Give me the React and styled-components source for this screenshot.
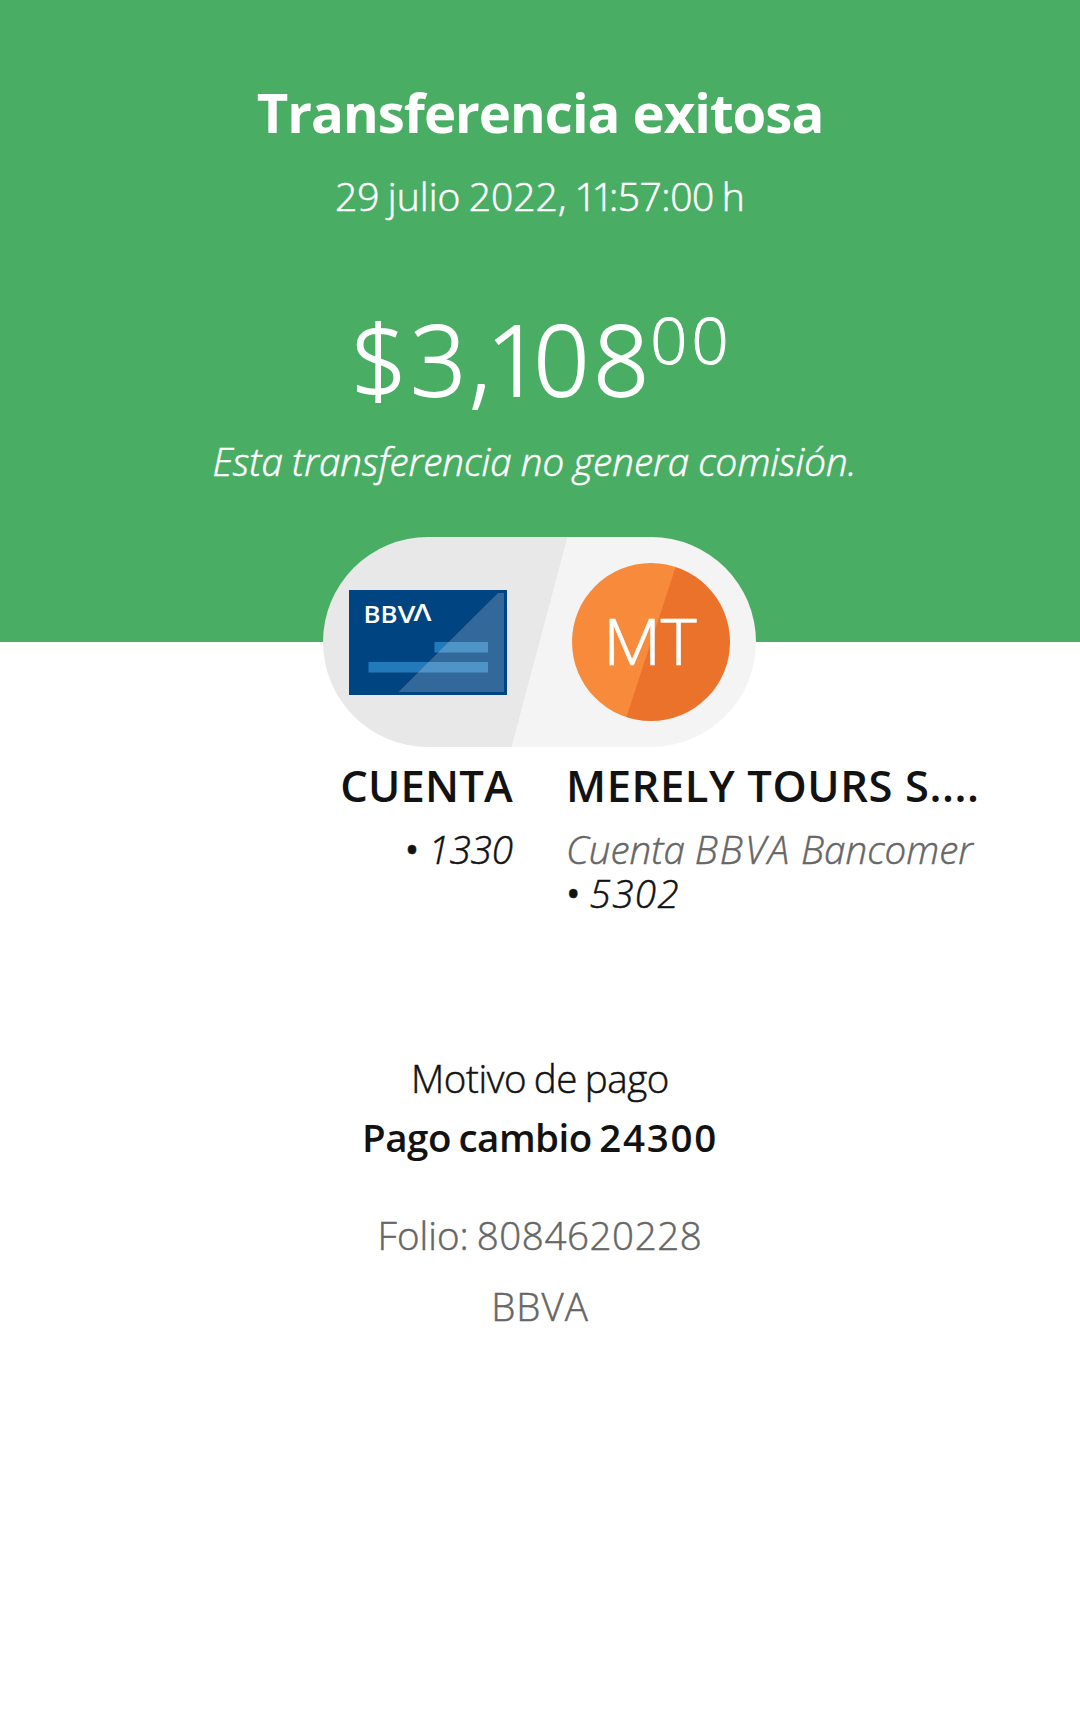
import React from "react";
import styled, { createGlobalStyle } from "styled-components";

const GlobalStyle = createGlobalStyle`
  * {
    box-sizing: border-box;
  }

  body {
    margin: 0;
    background: #ffffff;
    color: #121212;
    font-family: "Open Sans", "Noto Sans", sans-serif;
  }
`;

function App() {
  return (
    <>
      <GlobalStyle />
      <Receipt>
        <Header>
          <Title>Transferencia exitosa</Title>
          <DateText>
            29 julio 2022, <Spaced $gap={-5}>11</Spaced>
            <Spaced $gap={-0.5}>:57:00</Spaced> h
          </DateText>
          <Amount>
            <Spaced $gap={3}>$3</Spaced>
            <Spaced $gap={-4}>,</Spaced>
            <Spaced $gap={-9}>1</Spaced>
            <Spaced $gap={4}>0</Spaced>8<Cents>00</Cents>
          </Amount>
          <Commission>Esta transferencia no genera comisión.</Commission>
        </Header>

        {/* Origin card and destination avatar */}
        <Pill>
          <CardIcon />
          <Avatar>MT</Avatar>
        </Pill>

        <Accounts>
          <Account $align="right">
            <AccountName $gap={0.2}>CUENTA</AccountName>
            <AccountLine>
              <Bullet>•</Bullet> 1330
            </AccountLine>
          </Account>
          <Account $align="left">
            <AccountName $gap={0.6}>MERELY TOURS S....</AccountName>
            <AccountLine $muted>
              Cuenta <Spaced $gap={2}>BBVA</Spaced> Bancomer
            </AccountLine>
            <AccountLine>
              <Bullet>•</Bullet> <Spaced $gap={1.5}>5302</Spaced>
            </AccountLine>
          </Account>
        </Accounts>

        <Details>
          <Label>Motivo de pago</Label>
          <Reason>
            Pago cambio <Spaced $gap={1.7}>24300</Spaced>
          </Reason>
          <Folio>
            Folio: <Spaced $gap={0.6}>8084620228</Spaced>
          </Folio>
          <Bank>BBVA</Bank>
        </Details>
      </Receipt>
    </>
  );
}

function CardIcon() {
  return (
    <CardSvg viewBox="0 0 158 105">
      <rect width="158" height="105" fill="#004481" />
      <rect x="85.5" y="52" width="53.5" height="10.5" fill="#237aba" />
      <rect x="19.5" y="72" width="119.5" height="10.5" fill="#237aba" />
      <path d="M149 3h6v99H49.5z" fill="#ffffff" fillOpacity="0.2" />
      <CardText
        x="14.5"
        y="32.7"
        textLength="34"
        lengthAdjust="spacingAndGlyphs"
      >
        BB
      </CardText>
      <CardText
        x="48.5"
        y="32.7"
        textLength="18"
        lengthAdjust="spacingAndGlyphs"
      >
        V
      </CardText>
      <CardText
        x="64.5"
        y="31.2"
        textLength="18"
        lengthAdjust="spacingAndGlyphs"
      >
        Λ
      </CardText>
    </CardSvg>
  );
}

export default App;

const Receipt = styled.main`
  display: flex;
  flex-direction: column;
  align-items: center;
  width: 1080px;
  height: 1730px;
  overflow: hidden;
`;

const Header = styled.header`
  display: flex;
  flex-direction: column;
  align-items: center;
  width: 100%;
  height: 642px;
  padding-top: 82px;
  background: #49ae64;
  color: #ffffff;
  white-space: nowrap;
`;

const Spaced = styled.span`
  letter-spacing: ${(props) => props.$gap}px;
`;

const Title = styled.h1`
  margin: 0;
  font-size: 54.5px;
  font-weight: 700;
  letter-spacing: -1px;
  line-height: 60px;
`;

const DateText = styled.p`
  margin: 29px 0 0;
  font-size: 39px;
  font-weight: 300;
  letter-spacing: 0.05px;
  line-height: 50px;
  word-spacing: -2px;
  -webkit-text-stroke: 0.6px;
`;

const Amount = styled.div`
  display: flex;
  align-items: flex-start;
  margin-top: 82px;
  font-size: 98px;
  font-weight: 300;
  line-height: 110px;
  -webkit-text-stroke: 1.8px;
`;

const Cents = styled.span`
  margin: 1px -4px 0 1px;
  font-size: 65px;
  letter-spacing: 4px;
  line-height: 70px;
  -webkit-text-stroke: 1px;
`;

const Commission = styled.p`
  margin: 23px 0 0;
  padding-right: 11px;
  font-size: 38.5px;
  font-style: italic;
  font-weight: 300;
  letter-spacing: 0.05px;
  line-height: 50px;
  word-spacing: -1px;
  -webkit-text-stroke: 0.6px;
`;

const Pill = styled.div`
  display: flex;
  align-items: center;
  justify-content: space-between;
  flex-shrink: 0;
  width: 433px;
  height: 210px;
  margin-top: -105px;
  margin-right: 1px;
  padding: 0 26px;
  border-radius: 105px;
  background: linear-gradient(
    104.93deg,
    #e8e8e8 calc(50% - 0.4px),
    #f4f4f4 calc(50% + 0.4px)
  );
`;

const CardSvg = styled.svg`
  display: block;
  width: 158px;
  height: 105px;
`;

const CardText = styled.text`
  fill: #ffffff;
  font-family: "Open Sans", sans-serif;
  font-size: 23.5px;
  font-weight: 600;
`;

const Avatar = styled.div`
  display: flex;
  align-items: center;
  justify-content: center;
  width: 158px;
  height: 158px;
  padding-top: 2px;
  border-radius: 50%;
  background: linear-gradient(
    108.2deg,
    #f78b3b calc(50% - 0.5px),
    #eb722b calc(50% + 0.5px)
  );
  color: #ffffff;
  font-family: Roboto, sans-serif;
  font-size: 65px;
  font-weight: 300;
  line-height: 78px;
  -webkit-text-stroke: 0.5px;
`;

const Accounts = styled.section`
  display: grid;
  grid-template-columns: 513px 514px;
  column-gap: 53px;
  width: 100%;
  height: 168px;
  margin-top: 14px;
`;

const Account = styled.div`
  text-align: ${(props) => props.$align};
  white-space: nowrap;
`;

const AccountName = styled.h2`
  margin: 0 0 15.5px;
  font-size: 43.5px;
  font-weight: 600;
  letter-spacing: ${(props) => props.$gap}px;
  line-height: 50px;
`;

const AccountLine = styled.p`
  margin: 0;
  color: ${(props) => (props.$muted ? "#666666" : "#121212")};
  font-size: 38.5px;
  font-style: italic;
  font-weight: 300;
  line-height: 44.6px;
  -webkit-text-stroke: 0.5px;
`;

const Bullet = styled.span`
  margin-right: -1px;
  font-style: normal;
  font-weight: 400;
`;

const Details = styled.section`
  display: flex;
  flex-direction: column;
  align-items: center;
  margin-top: 124px;
  font-size: 38.5px;
  font-weight: 300;
  line-height: 50px;
  word-spacing: -2px;
  -webkit-text-stroke: 0.5px;
`;

const Label = styled.div`
  letter-spacing: -0.4px;
`;

const Reason = styled.div`
  margin-top: 9px;
  font-weight: 600;
  letter-spacing: -0.5px;
  -webkit-text-stroke: 0;
`;

const Folio = styled.div`
  margin-top: 48px;
  color: #666666;
`;

const Bank = styled.div`
  margin-top: 21px;
  color: #666666;
  letter-spacing: 1px;
`;
